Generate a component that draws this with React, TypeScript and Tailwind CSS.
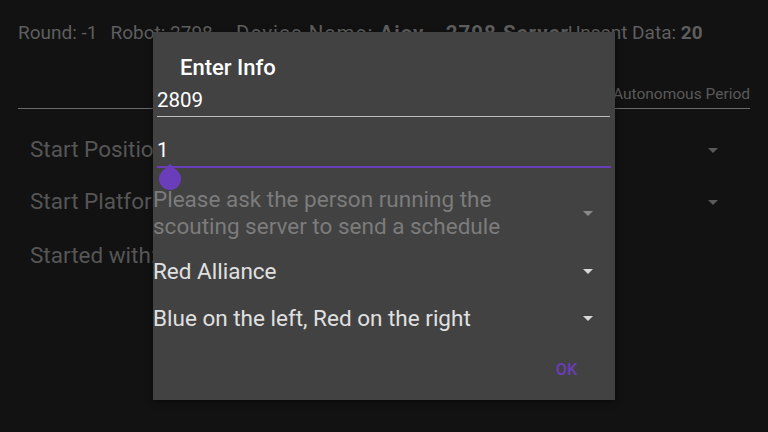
import React from "react";

const Arrow = ({ color }: { color: string }) => (
  <svg width="10" height="5" viewBox="0 0 10 5" className="shrink-0">
    <path d="M0 0 L10 0 L5 5 Z" fill={color} />
  </svg>
);

export default function App() {
  return (
    <div
      className="relative w-[768px] h-[432px] overflow-hidden bg-[#121212]"
      style={{ fontFamily: "Roboto, 'Liberation Sans', sans-serif" }}
    >
      {/* Background page */}
      <div className="flex flex-col">
        <div className="flex items-center h-[24px] mt-[21px] pl-[18px] text-[19px] text-[#5e5e5e] whitespace-nowrap">
          <div className="w-[218px] flex">
            <span>Round: -1</span>
            <span className="ml-[13px]">Robot: 2798</span>
          </div>
          <span className="w-[332px] text-[20.5px] tracking-[1px]">
            Device Name: <b>Aiov - 2798 Server</b>
          </span>
          <span>
            Unsent Data: <b>20</b>
          </span>
        </div>
        <div className="mx-[18px] mt-[37px] h-[27px] flex justify-end items-center border-b border-[#6a6a6a]">
          <span className="text-[15.5px] text-[#5a5a5a]">Autonomous Period</span>
        </div>
        <div className="flex flex-col text-[22.5px] text-[#565656] pl-[30px] pr-[50px] mt-[27px]">
          <div className="flex items-center justify-between h-[28px]">
            <span>Start Position</span>
            <Arrow color="#5a5a5a" />
          </div>
          <div className="flex items-center justify-between h-[28px] mt-[24px]">
            <span>Start Platform</span>
            <Arrow color="#5a5a5a" />
          </div>
          <div className="flex items-center justify-between h-[28px] mt-[26px]">
            <span>Started with:</span>
          </div>
        </div>
      </div>

      {/* Dialog */}
      <div className="absolute left-[153px] top-[32px] w-[462px] h-[368px] bg-[#424242] shadow-[0_2px_6px_rgba(0,0,0,0.5)] flex flex-col">
        <div className="pt-[24px] pl-[27px] h-[48px] text-[22px] leading-[24px] font-medium text-white">
          Enter Info
        </div>
        <div className="ml-[4px] mr-[5px] mt-[8px] flex flex-col">
          <div className="h-[24px] leading-[24px] text-[20.5px] text-white">2809</div>
          <div className="h-[4px]" />
          <div className="h-px bg-[#bdbdbd]" />
        </div>
        <div className="relative ml-[4px] mr-[4px] mt-[21px] flex flex-col">
          <div className="h-[24px] leading-[24px] text-[20.5px] text-white">1</div>
          <div className="h-[4px]" />
          <div className="h-[2px] bg-[#6a3dbb]" />
          <svg
            width="24"
            height="28"
            viewBox="0 0 24 28"
            className="absolute left-[1px] top-[26px]"
          >
            <circle cx="12" cy="15" r="11" fill="#6a3dbb" />
            <path d="M12 0 L18.5 6 L5.5 6 Z" fill="#6a3dbb" />
          </svg>
        </div>
        <div className="flex items-center justify-between mt-[18px] pr-[22px]">
          <div className="text-[22.5px] leading-[27px] text-[#7c7c7c]">
            Please ask the person running the
            <br />
            scouting server to send a schedule
          </div>
          <Arrow color="#8a8a8a" />
        </div>
        <div className="flex items-center justify-between mt-[18px] pr-[22px] h-[27px]">
          <span className="text-[22.5px] leading-[27px] text-[#e0e0e0]">Red Alliance</span>
          <Arrow color="#d8d8d8" />
        </div>
        <div className="flex items-center justify-between mt-[20px] pr-[22px] h-[27px]">
          <span className="text-[22.5px] leading-[27px] text-[#e0e0e0]">
            Blue on the left, Red on the right
          </span>
          <Arrow color="#d8d8d8" />
        </div>
        <div className="flex justify-end pr-[38px] mt-[28px]">
          <span className="text-[16px] leading-[20px] font-medium text-[#6a3dbb]">OK</span>
        </div>
      </div>
    </div>
  );
}
